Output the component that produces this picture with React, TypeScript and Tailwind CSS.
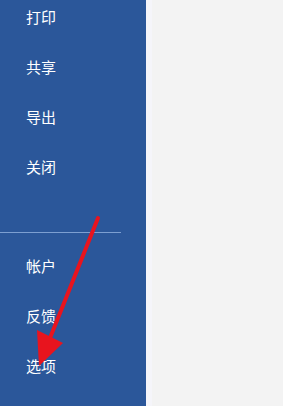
const topItems = ["打印", "共享", "导出", "关闭"];
const bottomItems = ["帐户", "反馈", "选项"];

export default function App() {
  return (
    <div
      className="relative flex h-[406px] w-[283px] overflow-hidden bg-[#f3f3f3]"
      style={{ fontFamily: '"Noto Sans CJK SC", "Noto Sans", sans-serif' }}
    >
      <aside className="flex w-[146px] shrink-0 flex-col bg-[#2b579a] text-white">
        <ul className="mt-[-8px]">
          {topItems.map((t) => (
            <li key={t} className="flex h-[50px] items-center pl-[26px] text-[15px]">
              {t}
            </li>
          ))}
        </ul>
        <div className="mt-[40px] h-px w-[121px] bg-[#7d9fd1]" />
        <ul className="mt-[8px]">
          {bottomItems.map((t) => (
            <li key={t} className="flex h-[50px] items-center pl-[26px] text-[15px]">
              {t}
            </li>
          ))}
        </ul>
      </aside>
      <div className="w-[6px] bg-[#f5f5fa]" />

      {/* red annotation arrow */}
      <svg className="pointer-events-none absolute left-0 top-0" width="283" height="406">
        <line x1="98" y1="218" x2="50" y2="338" stroke="#e8141e" strokeWidth="4" strokeLinecap="round" />
        <polygon points="37,330 63,343 39,366" fill="#e8141e" />
      </svg>
    </div>
  );
}
